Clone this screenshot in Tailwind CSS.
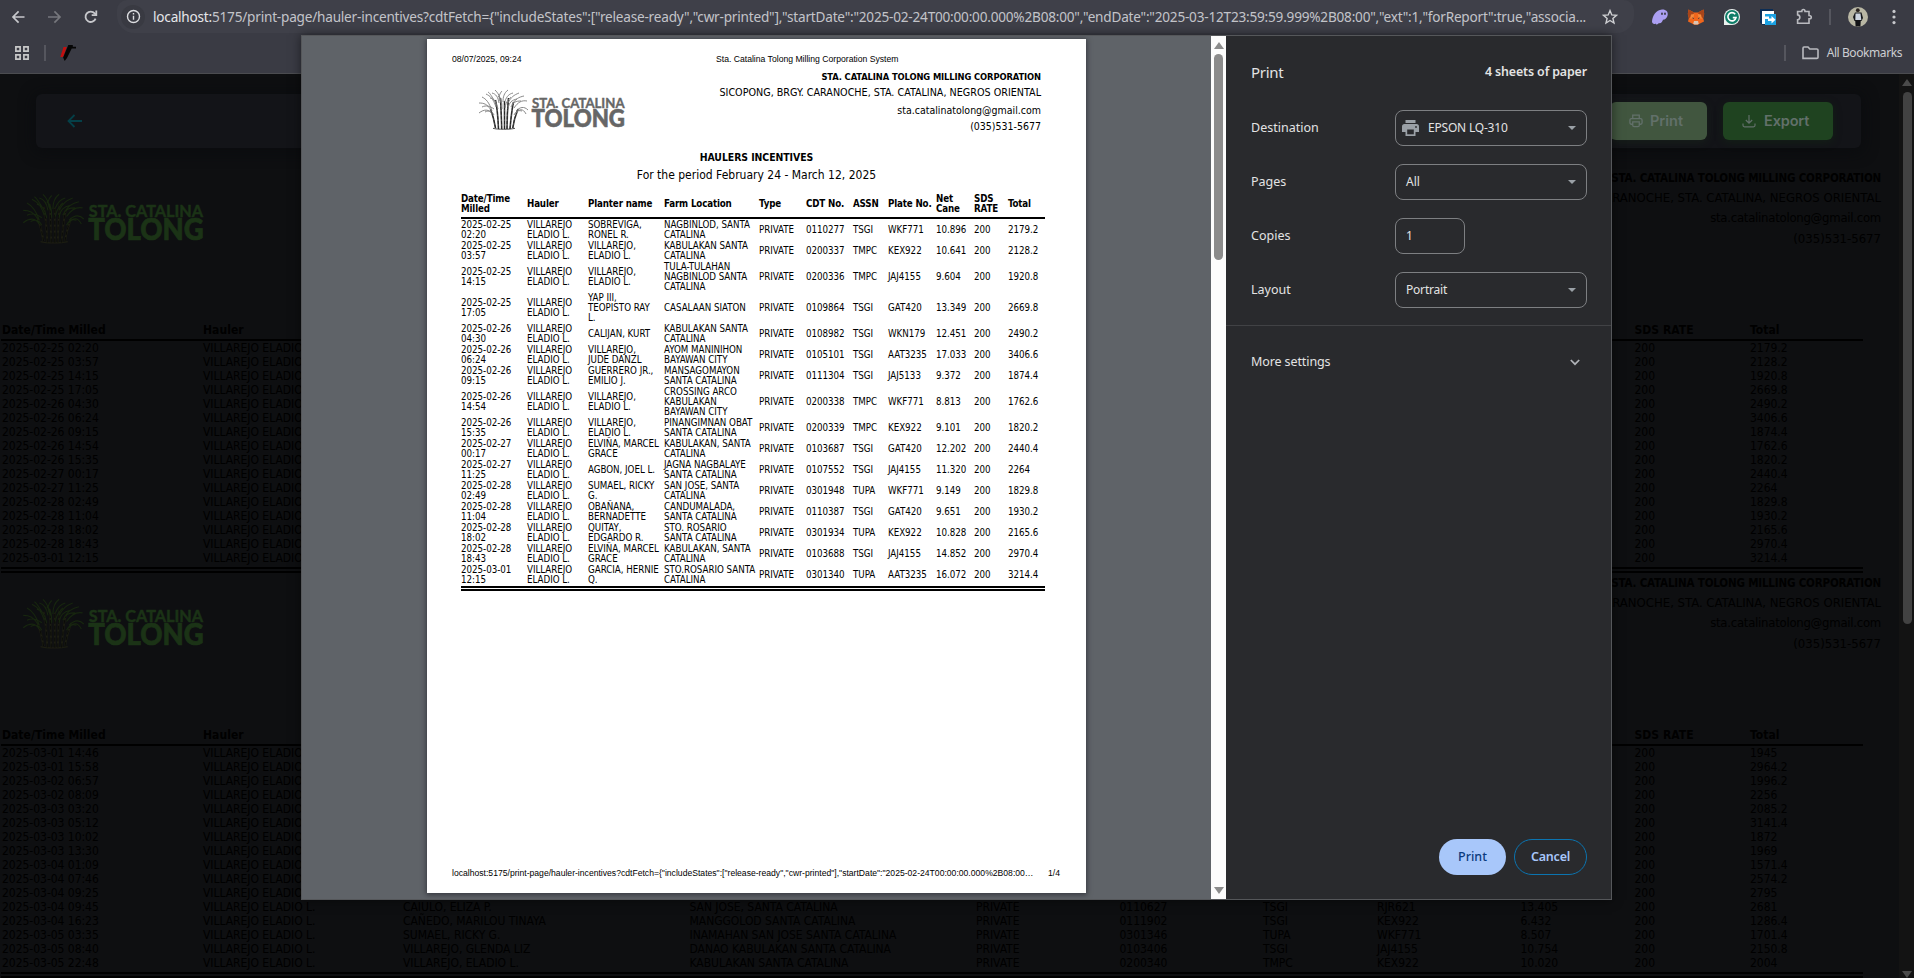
<!DOCTYPE html>
<html lang="en">
<head>
<meta charset="utf-8">
<title>Print - Haulers Incentives</title>
<script src="https://cdn.jsdelivr.net/npm/@tailwindcss/browser@4"></script>
</head>
<body class="bg-[#0e0f11]">
<div class="relative w-[1914px] h-[978px] overflow-hidden flex flex-col bg-[#0e0f11] font-['Noto_Sans',sans-serif]">

  <!-- Browser toolbar -->
  <header class="h-[74px] shrink-0 bg-[#3a3b44] border-b border-[#4b4c50] flex flex-col">
    <div class="h-[33px] flex items-center text-[#c7c8cc]">
      <div class="w-[117px] pl-[10px] flex items-center gap-[18px] shrink-0">
        <svg class="size-[18px]" viewBox="0 0 18 18" fill="none" stroke="currentColor" stroke-width="1.7"><path d="M14.500 9H3.2M8.600 3.400 3 9l5.600 5.600"/></svg>
        <svg class="size-[18px] text-[#76777d]" viewBox="0 0 18 18" fill="none" stroke="currentColor" stroke-width="1.7"><path d="M2 9h11.800M8.400 3.400 14 9l-5.600 5.600"/></svg>
        <svg class="size-[18px]" viewBox="0 0 18 18" fill="none" stroke="currentColor" stroke-width="1.8"><path d="M13.600 10.600A5.200 5.200 0 1 1 12.700 5.400L14.200 7"/><path d="M14.300 2.600v4.600H9.700"/></svg>
      </div>
      <div class="w-[1517px] h-[33px] rounded-b-[17px] rounded-t-[10px] bg-[#3f4049] flex items-center shrink-0 pl-1">
        <div class="size-6 rounded-full bg-[#393a42] flex items-center justify-center shrink-0">
          <svg class="size-[15px]" viewBox="0 0 15 15" fill="none" stroke="#dcdde0" stroke-width="1.4"><circle cx="7.5" cy="7.5" r="6"/><path d="M7.5 6.800v4M7.5 4v1.500"/></svg>
        </div>
        <div class="ml-2 w-[1432px] shrink-0 whitespace-nowrap text-[13.600px] tracking-[-0.210px] leading-[20px] text-[#c3c4c9]"><span class="text-[#e6e7ea]">localhost:</span>5175/print-page/hauler-incentives?cdtFetch={"includeStates":["release-ready","cwr-printed"],"startDate":"2025-02-24T00:00:00.000%2B08:00","endDate":"2025-03-12T23:59:59.999%2B08:00","ext":1,"forReport":true,"associa...</div>
        <svg class="ml-[16px] size-[18px] shrink-0" viewBox="0 0 18 18" fill="none" stroke="#cfd0d3" stroke-width="1.4"><path d="m9 2.600 1.800 4.300 4.700.4-3.600 3.100 1.100 4.600L9 12.500 5 15l1.100-4.600L2.500 7.300l4.700-.4z"/></svg>
      </div>
      <div class="flex items-center">
        <svg class="ml-[17px] size-[18px]" viewBox="0 0 18 18"><path d="M1 13.500C1.500 8 5 2 11 1.600c4-.2 6.200 2.200 5.700 5.400-.5 3.200-2.700 4.800-4.700 4.800-.6 2.200-2.600 4.300-4 3.300-1.200 1.600-3.200 1.700-3.400.3-1 1-3.600.6-3.600-1.900z" fill="#ab9ff2"/><ellipse cx="11" cy="5.700" rx=".9" ry="1.300" fill="#3a3b44"/><ellipse cx="14" cy="5.700" rx=".9" ry="1.300" fill="#3a3b44"/></svg>
        <svg class="ml-[18px] size-[18px]" viewBox="0 0 18 18"><path d="m1.500 1.500 5.500 3h4l5.500-3 .7 4.500-1 4 .8 3.500-4 2-2 1.200H7l-2-1.200-4-2 .8-3.500-1-4z" fill="#f0661c"/><path d="m1.500 1.500 5.500 3-1 4L1.800 10l-1-4zM16.500 1.500l-5.500 3 1 4 4.200 1.500 1-4z" fill="#a8451a"/><path d="m4 6.500 3.200-.5-.8 4-3.400.8zM14 6.500 10.800 6l.8 4 3.400.8z" fill="#f58a3c"/><path d="M7 13h4l.6 2.200-.9 1.300H7.300l-.9-1.300z" fill="#d9c4b4"/><path d="m4.800 9.500 2.200.6-.4 1zM13.200 9.500l-2.200.6.400 1z" fill="#233447"/></svg>
        <svg class="ml-[18px] size-[18px]" viewBox="0 0 18 18"><path d="M1 9a8 8 0 1 1 8 8H1z" fill="#e9f0ee"/><circle cx="9" cy="9" r="6.900" fill="#0f7d68"/><path d="M12.200 6.200A4.100 4.100 0 1 0 13 9.600H9.800" fill="none" stroke="#fff" stroke-width="1.600"/></svg>
        <svg class="ml-[18px] size-[18px]" viewBox="0 0 18 18"><path d="M1 1h13v16H3.500L1 14.500z" fill="#0b2d55"/><path d="M6 6h11v11H6z" fill="#1ba1e2"/><path d="M3 3h12v3H6v2.500h4V11H6v5H3z" fill="#fff"/><path d="M9 10.500h3.500V8l4 3.700-4 3.700V13H9z" fill="#fff"/></svg>
        <svg class="ml-[18px] size-[18px]" viewBox="0 0 18 18" fill="none" stroke="#b9babf" stroke-width="1.600"><path d="M2.600 3.500h4.200c0-1 .3-2 1.600-2s1.600 1 1.600 2h4v4c1 0 2.300.2 2.300 1.700s-1.300 1.700-2.300 1.700v4.400H2.600v-3.500c3-.4 3-4.500 0-4.900z"/></svg>
        <span class="ml-[16px] h-4 w-[2px] bg-[#55565e]"></span>
        <svg class="ml-[17px] size-5" viewBox="0 0 20 20"><circle cx="10" cy="10" r="10" fill="#b9b7a4"/><path d="M7 5.500h6.500L15 11l-1.500 3h-7L5 10z" fill="#16181c"/><path d="M7.500 6.500h5l.8 6.500h-6z" fill="#cdd5e0"/><circle cx="9.800" cy="3.200" r="1.900" fill="#2a2320"/><path d="M7.200 13h5.600l-.4 6.600H7.600z" fill="#121316"/></svg>
        <svg class="ml-[17px] size-[18px]" viewBox="0 0 18 18" fill="#c7c8cc"><circle cx="9" cy="3.400" r="1.600"/><circle cx="9" cy="9" r="1.600"/><circle cx="9" cy="14.600" r="1.600"/></svg>
      </div>
    </div>
    <div class="h-[40px] flex items-center">
      <svg class="ml-[15px] size-[14px]" viewBox="0 0 14 14" fill="none" stroke="#c7c8c8" stroke-width="1.700"><path d="M.9.9h4.200v4.200H.9zM8.900.9h4.200v4.200H8.900zM.9 8.900h4.200v4.200H.9zM8.900 8.900h4.200v4.200H8.900z"/></svg>
      <span class="ml-[15px] h-4 w-[2px] bg-[#55565e]"></span>
      <svg class="ml-[14px] size-[16px]" viewBox="0 0 16 16"><path d="M3.500 2h3.300L3.200 12H.3z" fill="#c11010"/><path d="M8.300 0h4.500v1.800H16V3.600h-4.300L7 13l-2.300 3-1.600-3.500z" fill="#050505"/></svg>
      <div class="ml-auto flex items-center mr-[12px]">
        <span class="h-4 w-[2px] bg-[#55565e]"></span>
        <svg class="ml-[16px] w-[17px] h-[14px]" viewBox="0 0 17 14" fill="none" stroke="#b9babf" stroke-width="1.600"><path d="M1 12.400V2.200c0-.7.400-1.200 1-1.200h4l1.800 2h7c.7 0 1.200.4 1.200 1.100v7.300c0 .7-.5 1-1.200 1z"/></svg>
        <span class="ml-[8px] text-[12px] tracking-[-0.420px] text-[#cccdd1]">All Bookmarks</span>
      </div>
    </div>
  </header>

  <!-- Dimmed page behind the dialog -->
  <div class="flex h-[904px] overflow-hidden">
    <main class="w-[1899px] overflow-hidden">
      <div class="ml-[36px] mt-[20px] w-[1825px] h-[54px] rounded-md bg-[#131418] shadow-[0_2px_14px_3px_rgba(10,11,14,0.7)] flex items-center justify-between pl-[31px] pr-[28px]">
        <svg class="size-4" viewBox="0 0 16 16" fill="none" stroke="#054048" stroke-width="1.800"><path d="M15 8H1.500M7.500 2 1.500 8l6 6"/></svg>
        <div class="flex gap-4 font-['Inter',sans-serif] font-semibold text-[14.500px] text-[#62706a]">
          <div class="w-[97px] h-[38px] rounded-md bg-[#41563f] shadow-[0_2px_8px_rgba(30,50,30,0.400)] flex items-center pl-[19px] gap-[7px]">
            <svg class="size-[14px]" viewBox="0 0 15 15" fill="none" stroke="currentColor" stroke-width="1.400"><path d="M4 5V1.200h7V5M4 11H2.500C1.500 11 1 10.400 1 9.500v-3C1 5.500 1.600 5 2.500 5h10c.9 0 1.500.5 1.500 1.500v3c0 .9-.5 1.500-1.500 1.500H11M4 8.500h7V12c0 1-.5 1.600-1.500 1.600h-4C4.500 13.600 4 13 4 12z"/></svg>
            <span>Print</span>
          </div>
          <div class="w-[110px] h-[38px] rounded-md bg-[#1f4320] shadow-[0_2px_8px_rgba(20,50,20,0.400)] flex items-center pl-[19px] gap-[8px]">
            <svg class="size-[14px]" viewBox="0 0 14 14" fill="none" stroke="currentColor" stroke-width="1.200"><path d="M7 1v8M3.800 6 7 9.200 10.200 6M1 9.500v1.800c0 .9.600 1.500 1.500 1.500h9c.9 0 1.500-.6 1.500-1.500V9.500"/></svg>
            <span class="tracking-[-0.150px]">Export</span>
          </div>
        </div>
      </div>
      <div class="h-[20px]"></div>
      <div id="sections"></div>
    </main>
    <div class="w-[15px] bg-[#131313] flex flex-col items-center pt-[5px]">
      <svg class="w-[10px] h-[7px] ml-[1px]" viewBox="0 0 10 7" fill="#4a4a4a"><path d="M5 0 10 7H0z"/></svg>
      <div class="mt-[6px] ml-[1px] w-[9px] h-[535px] rounded-full bg-[#424242]"></div>
      <svg class="mt-[347px] w-[10px] h-[7px] ml-[1px]" viewBox="0 0 10 7" fill="#4a4a4a"><path d="M5 7 0 0h10z"/></svg>
    </div>
  </div>

  <!-- Print dialog -->
  <div class="absolute left-[301px] top-[35px] w-[1311px] h-[865px] border border-[#55575a] bg-[#292a2d] flex shadow-[0_0_10px_rgba(0,0,0,0.500)]">
    <div class="w-[909px] bg-[#5f6368] pt-[3px] pl-[125px] overflow-hidden">
      <div class="w-[659px] h-[854px] bg-white text-black shadow-[0_1px_5px_1px_rgba(30,32,40,0.600)] flex flex-col">
        <div class="flex h-[40px] pt-[12px] pl-[25px] font-['Liberation_Sans',sans-serif] text-[8.650px] leading-[16px] whitespace-nowrap">
          <span class="w-[264px]">08/07/2025, 09:24</span><span>Sta. Catalina Tolong Milling Corporation System</span>
        </div>
        <div class="h-[91px] -mt-[10px] flex justify-between pl-[51px] pr-[45px] font-['DejaVu_Sans_Condensed','DejaVu_Sans',sans-serif] [font-stretch:condensed]">
          <div id="print-logo" class="mt-[20px] w-[148px] h-[42px]"></div>
          <div class="text-right text-[10.500px] leading-[16.300px] whitespace-nowrap">
            <p class="font-bold text-[9.300px] tracking-[-0.100px]">STA. CATALINA TOLONG MILLING CORPORATION</p>
            <p class="text-[10.700px]">SICOPONG, BRGY. CARANOCHE, STA. CATALINA, NEGROS ORIENTAL</p>
            <p>sta.catalinatolong@gmail.com</p>
            <p>(035)531-5677</p>
          </div>
        </div>
        <div class="h-[37px] -mt-[10px] text-center whitespace-nowrap font-['DejaVu_Sans_Condensed','DejaVu_Sans',sans-serif] [font-stretch:condensed]">
          <p class="font-bold text-[10.400px] leading-[14px] tracking-[-0.050px]">HAULERS INCENTIVES</p>
          <p class="text-[12px] leading-[22px]">For the period February 24 - March 12, 2025</p>
        </div>
        <div id="print-table" class="ml-[34px] mt-[6px] w-[584px] whitespace-nowrap font-['DejaVu_Sans_Condensed','DejaVu_Sans',sans-serif] [font-stretch:condensed] text-[9.700px] tracking-[-0.030px] leading-[9.900px]"></div>
        <div class="mt-auto mb-[12px] flex justify-between pl-[25px] pr-[26px] font-['Liberation_Sans',sans-serif] text-[8.620px] leading-[16px] whitespace-nowrap">
          <span>localhost:5175/print-page/hauler-incentives?cdtFetch={"includeStates":["release-ready","cwr-printed"],"startDate":"2025-02-24T00:00:00.000%2B08:00…</span><span>1/4</span>
        </div>
      </div>
    </div>
    <div class="w-[15px] bg-[#fcfcfc] flex flex-col items-center pt-[6px] pb-[5px]">
      <svg class="w-[10px] h-[7px]" viewBox="0 0 10 7" fill="#8b8b8b"><path d="M5 0 10 7H0z"/></svg>
      <div class="mt-[5px] w-[9px] h-[206px] rounded-full bg-[#8b8b8b]"></div>
      <svg class="mt-auto w-[10px] h-[7px]" viewBox="0 0 10 7" fill="#8b8b8b"><path d="M5 7 0 0h10z"/></svg>
    </div>
    <div class="flex-1 flex flex-col text-[#e3e3e3] text-[12.500px]">
      <div class="h-[74px] flex items-center justify-between pl-[25px] pr-[24px] pb-[2px]">
        <span class="text-[15px] tracking-[-0.300px]">Print</span><span class="font-semibold text-[12.400px] tracking-[-0.120px]">4 sheets of paper</span>
      </div>
      <div class="flex flex-col gap-[18px] pl-[25px]">
        <div class="flex items-center"><span class="w-[144px]">Destination</span>
          <div class="w-[192px] h-[36px] rounded-lg border border-[#7d7f82] flex items-center pl-[6px] pr-[10px] text-[12px]">
            <svg class="w-[17px] h-[16px] mr-[9px]" viewBox="0 0 17 16" fill="#9aa0a6"><path d="M3.500 0h10v3h-10zM2.500 4h12A2.500 2.500 0 0 1 17 6.500V12h-3.500v4h-10v-4H0V6.500A2.500 2.500 0 0 1 2.500 4z"/><path d="M5.200 9.500h6.600v4.800H5.200z" fill="#292a2d"/><circle cx="14" cy="7" r=".9" fill="#292a2d"/></svg>
            <span class="tracking-[-0.200px]">EPSON LQ-310</span>
            <svg class="ml-auto w-[8px] h-[4px]" viewBox="0 0 8 4" fill="#9aa0a6"><path d="M0 0h8L4 4z"/></svg>
          </div></div>
        <div class="flex items-center"><span class="w-[144px]">Pages</span>
          <div class="w-[192px] h-[36px] rounded-lg border border-[#7d7f82] flex items-center justify-between pl-[10px] pr-[10px] text-[12px]"><span>All</span><svg class="w-[8px] h-[4px]" viewBox="0 0 8 4" fill="#9aa0a6"><path d="M0 0h8L4 4z"/></svg></div></div>
        <div class="flex items-center"><span class="w-[144px]">Copies</span>
          <div class="w-[70px] h-[36px] rounded-lg border border-[#7d7f82] flex items-center pl-[10px] text-[12px]">1</div></div>
        <div class="flex items-center"><span class="w-[144px]">Layout</span>
          <div class="w-[192px] h-[36px] rounded-lg border border-[#7d7f82] flex items-center justify-between pl-[10px] pr-[10px] text-[12px]"><span class="tracking-[-0.200px]">Portrait</span><svg class="w-[8px] h-[4px]" viewBox="0 0 8 4" fill="#9aa0a6"><path d="M0 0h8L4 4z"/></svg></div></div>
      </div>
      <div class="mt-[17px] border-t border-[#414245] h-[74px] flex items-center justify-between pl-[25px] pr-[31px]">
        <span class="tracking-[-0.100px]">More settings</span>
        <svg class="w-[10px] h-[7px]" viewBox="0 0 10 7" fill="none" stroke="#b0b3b8" stroke-width="1.700"><path d="m.8 1 4.200 4.200L9.200 1"/></svg>
      </div>
      <div class="mt-auto mb-[24px] pr-[24px] flex justify-end gap-2 text-[12.500px]">
        <div class="w-[67px] h-[36px] rounded-[18px] bg-[#a8c7fa] text-[#0b3a7d] flex items-center justify-center font-medium">Print</div>
        <div class="w-[73px] h-[36px] rounded-[18px] border border-[#0b74b0] text-[#a8c7fa] flex items-center justify-center font-semibold tracking-[-0.200px]">Cancel</div>
      </div>
    </div>
  </div>
</div>

<script>
  // Company logo: sugar cane clump plus wordmark; colours depend on where it is placed.
  const stalks = 'M17.500 39C16 30 14 24 12.500 20M20.500 40C20 28 19 18 17.500 11M23.700 40C23.500 30 23 20 22.500 9M26.500 40V12M29 40C29 28 29.500 20 30.500 9M32 40C33 28 34 20 35.500 13M34.800 39C36 30 38 25 40 20';
  const logo = (cls, leaf, stalk, word, node) => `<svg class="${cls}" viewBox="0 0 148 42" fill="none">
    <path d="${stalks}" stroke="${stalk}" stroke-width="1.600"/>
    <path d="M15 39.300c4 1.300 17 1.300 22 0" stroke="${stalk}" stroke-width="1"/>
    <path d="${stalks}" stroke="${node}" stroke-width=".8" stroke-dasharray="3.200 1.600"/>
    <g stroke="${leaf}" stroke-width=".9">
      <path d="M14 25C11 20 6 20 1 24M13 21C9 15 6 14 1 14M14 22C11 13 8 10 4 8M18 18C15 9 12 7 8 5M18 14C14 8 12 4 10 3M21 14C20 8 18 5 14 4M23 14C22 7 20 4 17 1M25 13C25 8 26 4 30 1M27 12C29 7 31 5 35 4M30 14C33 8 36 6 41 4M34 16C37 10 41 8 46 7M36 19C40 13 44 11 49 12M38 22C42 18 46 17 50 21M38 24C41 20 45 19 48 25M16 20C12 17 8 16 4 18M20 20C18 12 16 10 12 9M30 20C31 13 34 11 39 10M24 20C24 12 23 9 20 7M27 19C28 12 31 10 33 8M16 26C14 22 11 21 7 23M36 26C38 22 40 21 44 22M22 12C20 8 22 4 24 2M33 18C35 13 38 12 43 12"/></g>
    <text x="54" y="19" textLength="92.500" lengthAdjust="spacingAndGlyphs" fill="${word}" stroke="${word}" stroke-width=".4" font-family="Lato, sans-serif" font-weight="700" font-size="14">STA. CATALINA</text>
    <text x="53.500" y="37.800" textLength="93.500" lengthAdjust="spacingAndGlyphs" fill="${word}" stroke="${word}" stroke-width=".6" font-family="Lato, sans-serif" font-weight="900" font-size="24.500">TOLONG</text>
  </svg>`;
  document.getElementById('print-logo').innerHTML = logo('w-[148px] h-[42px]', '#7d7d7d', '#4a4a4a', '#666666', '#1c1c1c');

  const T = (s) => s.split('\n').map((r) => r.trim().split('|'));
  const first = T(`2025-02-25/02:20|SOBREVIGA,/RONEL R.|NAGBINLOD, SANTA/CATALINA|0110277|TSGI|WKF771|10.896|2179.2
    2025-02-25/03:57|VILLAREJO,/ELADIO L.|KABULAKAN SANTA/CATALINA|0200337|TMPC|KEX922|10.641|2128.2
    2025-02-25/14:15|VILLAREJO,/ELADIO L.|TULA-TULAHAN/NAGBINLOD SANTA/CATALINA|0200336|TMPC|JAJ4155|9.604|1920.8
    2025-02-25/17:05|YAP III,/TEOPISTO RAY/L.|CASALAAN SIATON|0109864|TSGI|GAT420|13.349|2669.8
    2025-02-26/04:30|CALIJAN, KURT|KABULAKAN SANTA/CATALINA|0108982|TSGI|WKN179|12.451|2490.2
    2025-02-26/06:24|VILLAREJO,/JUDE DANZL|AYOM MANINIHON/BAYAWAN CITY|0105101|TSGI|AAT3235|17.033|3406.6
    2025-02-26/09:15|GUERRERO JR.,/EMILIO J.|MANSAGOMAYON/SANTA CATALINA|0111304|TSGI|JAJ5133|9.372|1874.4
    2025-02-26/14:54|VILLAREJO,/ELADIO L.|CROSSING ARCO/KABULAKAN/BAYAWAN CITY|0200338|TMPC|WKF771|8.813|1762.6
    2025-02-26/15:35|VILLAREJO,/ELADIO L.|PINANGIMNAN OBAT/SANTA CATALINA|0200339|TMPC|KEX922|9.101|1820.2
    2025-02-27/00:17|ELVIÑA, MARCEL/GRACE|KABULAKAN, SANTA/CATALINA|0103687|TSGI|GAT420|12.202|2440.4
    2025-02-27/11:25|AGBON, JOEL L.|JAGNA NAGBALAYE/SANTA CATALINA|0107552|TSGI|JAJ4155|11.320|2264
    2025-02-28/02:49|SUMAEL, RICKY/G.|SAN JOSE, SANTA/CATALINA|0301948|TUPA|WKF771|9.149|1829.8
    2025-02-28/11:04|OBAÑANA,/BERNADETTE|CANDUMALADA,/SANTA CATALINA|0110387|TSGI|GAT420|9.651|1930.2
    2025-02-28/18:02|QUITAY,/EDGARDO R.|STO. ROSARIO/SANTA CATALINA|0301934|TUPA|KEX922|10.828|2165.6
    2025-02-28/18:43|ELVIÑA, MARCEL/GRACE|KABULAKAN, SANTA/CATALINA|0103688|TSGI|JAJ4155|14.852|2970.4
    2025-03-01/12:15|GARCIA, HERNIE/Q.|STO.ROSARIO SANTA/CATALINA|0301340|TUPA|AAT3235|16.072|3214.4`);
  const second = T(`2025-03-01 14:46|||||||1945
    2025-03-01 15:58|||||||2964.2
    2025-03-02 06:57|||||||1996.2
    2025-03-02 08:09|||||||2256
    2025-03-03 03:20|||||||2085.2
    2025-03-03 05:12|||||||3141.4
    2025-03-03 10:02|||||||1872
    2025-03-03 13:30|||||||1969
    2025-03-04 01:09|||||||1571.4
    2025-03-04 07:46|||||||2574.2
    2025-03-04 09:25|||||||2795
    2025-03-04 09:45|CAIULO, ELIZA P.|SAN JOSE, SANTA CATALINA|0110627|TSGI|RJR621|13.405|2681
    2025-03-04 16:23|CAÑEDO, MARILOU TINAYA|MANGGOLOD SANTA CATALINA|0111902|TSGI|KEX922|6.432|1286.4
    2025-03-05 03:35|SUMAEL, RICKY G.|INAMAHAN SAN JOSE SANTA CATALINA|0301346|TUPA|WKF771|8.507|1701.4
    2025-03-05 08:40|VILLAREJO, GLENDA LIZ|DANAO KABULAKAN SANTA CATALINA|0103406|TSGI|JAJ4155|10.754|2150.8
    2025-03-05 22:48|VILLAREJO, ELADIO L.|KABULAKAN SANTA CATALINA|0200340|TMPC|KEX922|10.020|2004`);
  const expand = (r, hauler) => [r[0], hauler, r[1], r[2], 'PRIVATE', r[3], r[4], r[5], r[6], '200', r[7]];
  const cells = (r) => r.map((c) => `<div>${c.replaceAll('/', '<br>')}</div>`).join('');

  const printGrid = 'grid grid-cols-[66px_61px_76px_95px_47px_47px_35px_48px_38px_34px_37px] items-center';
  document.getElementById('print-table').innerHTML =
    `<div class="${printGrid} h-[26px] pb-[3px] border-b-2 border-black font-bold tracking-[-0.150px]">
      <div>Date/Time<br>Milled</div><div>Hauler</div><div>Planter name</div><div>Farm Location</div><div>Type</div><div>CDT No.</div><div>ASSN</div><div>Plate No.</div><div>Net<br>Cane</div><div>SDS<br>RATE</div><div>Total</div></div>`
    + first.map((r) => `<div class="${printGrid} py-[0.630px]">${cells(expand(r, 'VILLAREJO/ELADIO L.'))}</div>`).join('')
    + '<div class="h-[5px] border-y-2 border-black"></div>';

  const pageGrid = 'grid grid-cols-[201px_200px_286.500px_286.500px_143.500px_143.500px_114px_143.500px_114px_115.500px_113px]';
  const section = (rows) => `<section class="h-[405px] overflow-hidden text-black whitespace-nowrap font-['DejaVu_Sans_Condensed','DejaVu_Sans',sans-serif] [font-stretch:condensed]">
    <div class="h-[155px] flex justify-between pl-[22px] pr-[18px]">
      <div class="pt-[25px]">${logo('w-[183px] h-[52px]', '#17260f', '#1c1d12', '#1b3316', '#0a0b08')}</div>
      <div class="text-right text-[13px] leading-[20.200px]">
        <p class="font-bold text-[11.500px] tracking-[-0.170px]">STA. CATALINA TOLONG MILLING CORPORATION</p>
        <p>SICOPONG, BRGY. CARANOCHE, STA. CATALINA, NEGROS ORIENTAL</p>
        <p class="tracking-[-0.250px]">sta.catalinatolong@gmail.com</p><p>(035)531-5677</p>
      </div>
    </div>
    <div class="ml-[1px] w-[1862px] text-[12px] tracking-[-0.030px] leading-[14px]">
      <div class="${pageGrid} pl-[1px] h-[18px] border-b-2 border-black font-bold text-[12px] tracking-[0.050px]"><div>Date/Time Milled</div><div>Hauler</div><div>Planter name</div><div>Farm Location</div><div>Type</div><div>CDT No.</div><div>ASSN</div><div>Plate No.</div><div>Net Cane</div><div>SDS RATE</div><div>Total</div></div>
      ${rows.map((r) => `<div class="${pageGrid} pl-[1px] h-[14px]">${r.map((c) => `<div>${c.replaceAll('/', ' ')}</div>`).join('')}</div>`).join('')}
      <div class="mt-[2px] h-[6px] border-y-2 border-black"></div>
    </div></section>`;
  document.getElementById('sections').innerHTML =
    section(first.map((r) => expand(r, 'VILLAREJO ELADIO L.'))) + section(second.map((r) => expand(r, 'VILLAREJO ELADIO L.')));
</script>
</body>
</html>
